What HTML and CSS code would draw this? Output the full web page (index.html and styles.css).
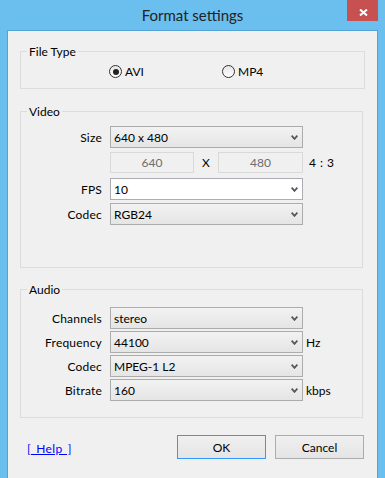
FILE: index.html
```html
<!DOCTYPE html>
<html lang="en">
<head>
    <meta charset="UTF-8">
    <meta name="viewport" content="width=device-width, initial-scale=1.0">
    <title>Format settings</title>
    <link rel="stylesheet" href="styles.css">
</head>
<body>
    <div class="window">
        <div class="titlebar">
            <div></div>
            <div class="title">Format settings</div>
            <div class="close">
                <svg width="9" height="7" viewBox="0 0 9 7"><path d="M1 0.5 8 6.5 M8 0.5 1 6.5" stroke="#fff" stroke-width="2" fill="none"/></svg>
            </div>
        </div>

        <div class="client">
            <div class="group group-type">
                <div class="group-title">File Type</div>
                <div class="radios">
                    <div class="radio"><span class="dot checked"></span>AVI</div>
                    <div class="radio"><span class="dot"></span>MP4</div>
                </div>
            </div>

            <div class="group group-video">
                <div class="group-title">Video</div>
                <div class="row row-size">
                    <div class="label">Size</div>
                    <div class="combo"><span>640 x 480</span><svg class="arrow" width="7" height="5" viewBox="0 0 7 5"><path d="M0.6 0.6 3.5 3.9 6.4 0.6" fill="none" stroke="#555" stroke-width="1.7"/></svg></div>
                </div>
                <div class="row row-dims">
                    <div class="label"></div>
                    <div class="dims">
                        <div class="edit edit-w">640</div>
                        <div class="times">X</div>
                        <div class="edit edit-h">480</div>
                    </div>
                    <div class="unit ratio">4 : 3</div>
                </div>
                <div class="row row-fps">
                    <div class="label">FPS</div>
                    <div class="combo editable"><span>10</span><svg class="arrow" width="7" height="5" viewBox="0 0 7 5"><path d="M0.6 0.6 3.5 3.9 6.4 0.6" fill="none" stroke="#555" stroke-width="1.7"/></svg></div>
                </div>
                <div class="row row-codec">
                    <div class="label">Codec</div>
                    <div class="combo"><span>RGB24</span><svg class="arrow" width="7" height="5" viewBox="0 0 7 5"><path d="M0.6 0.6 3.5 3.9 6.4 0.6" fill="none" stroke="#555" stroke-width="1.7"/></svg></div>
                </div>
            </div>

            <div class="group group-audio">
                <div class="group-title">Audio</div>
                <div class="row row-first">
                    <div class="label">Channels</div>
                    <div class="combo"><span>stereo</span><svg class="arrow" width="7" height="5" viewBox="0 0 7 5"><path d="M0.6 0.6 3.5 3.9 6.4 0.6" fill="none" stroke="#555" stroke-width="1.7"/></svg></div>
                </div>
                <div class="row">
                    <div class="label">Frequency</div>
                    <div class="combo"><span>44100</span><svg class="arrow" width="7" height="5" viewBox="0 0 7 5"><path d="M0.6 0.6 3.5 3.9 6.4 0.6" fill="none" stroke="#555" stroke-width="1.7"/></svg></div>
                    <div class="unit">Hz</div>
                </div>
                <div class="row">
                    <div class="label">Codec</div>
                    <div class="combo"><span>MPEG-1 L2</span><svg class="arrow" width="7" height="5" viewBox="0 0 7 5"><path d="M0.6 0.6 3.5 3.9 6.4 0.6" fill="none" stroke="#555" stroke-width="1.7"/></svg></div>
                </div>
                <div class="row">
                    <div class="label">Bitrate</div>
                    <div class="combo"><span>160</span><svg class="arrow" width="7" height="5" viewBox="0 0 7 5"><path d="M0.6 0.6 3.5 3.9 6.4 0.6" fill="none" stroke="#555" stroke-width="1.7"/></svg></div>
                    <div class="unit">kbps</div>
                </div>
            </div>

            <div class="footer">
                <a class="help" href="#">[ Help ]</a>
                <div class="buttons">
                    <button class="btn default">OK</button>
                    <button class="btn">Cancel</button>
                </div>
            </div>
        </div>
    </div>
</body>
</html>
```

FILE: styles.css
```css
body {
    margin: 0;
    padding: 0;
    font-family: Lato, "Open Sans", sans-serif;
    font-size: 12px;
    color: #000;
}
.window {
    width: 385px;
    height: 478px;
    background-color: #6bbfef;
}
.titlebar {
    height: 30px;
    display: grid;
    grid-template-columns: 1fr auto 1fr;
}
.title {
    font-size: 15px;
    line-height: 30px;
    color: #222;
}
.close {
    justify-self: end;
    align-self: start;
    width: 31px;
    height: 21px;
    margin-right: 7px;
    background-color: #c75050;
    display: flex;
    align-items: center;
    justify-content: center;
    box-sizing: border-box;
    padding: 3px 0 0 2px;
}
.close svg {
    display: block;
}
.client {
    margin: 0 7px;
    height: 438px;
    border: 1px solid #55a2d6;
    background-color: #f0f0f0;
    padding-top: 20px;
    box-sizing: content-box;
}
.group {
    margin-left: 12px;
    width: 343px;
    box-sizing: border-box;
    border: 1px solid #dcdcdc;
}
.group-type {
    width: 345px;
    padding-bottom: 9px;
}
.group-video {
    margin-top: 22px;
    padding-bottom: 42px;
}
.group-audio {
    margin-top: 21px;
    padding-bottom: 16px;
}
.group-title {
    display: table;
    margin: -8px 0 0 6px;
    padding: 0 2px;
    line-height: 15px;
    background-color: #f0f0f0;
}
.radios {
    display: flex;
    margin: 5px 0 0 88px;
    line-height: 15px;
}
.radio {
    width: 113px;
    display: flex;
    align-items: center;
    gap: 3px;
}
.dot {
    width: 11px;
    height: 11px;
    border: 1px solid #333;
    border-radius: 50%;
    background: linear-gradient(#e6e6e6, #ffffff);
    display: flex;
    align-items: center;
    justify-content: center;
}
.dot.checked::after {
    content: "";
    width: 6px;
    height: 6px;
    border-radius: 50%;
    background-color: #222;
}
.row {
    display: flex;
    align-items: center;
    margin-top: 2px;
}
.row-size {
    margin-top: 7px;
}
.row-dims {
    margin-top: 4px;
}
.row-fps {
    margin-top: 5px;
}
.row-codec {
    margin-top: 3px;
}
.row-first {
    margin-top: 10px;
}
.label {
    width: 81px;
    margin-right: 8px;
    text-align: right;
    letter-spacing: 0.2px;
}
.combo {
    width: 193px;
    height: 22px;
    box-sizing: border-box;
    border: 1px solid #acacac;
    background: linear-gradient(#f2f2f2, #e5e5e5);
    display: flex;
    align-items: center;
    justify-content: space-between;
    padding: 0 4px 0 3px;
}
.combo.editable {
    background: #fff;
    border-color: #abadb3;
}
.arrow {
    display: block;
}
.dims {
    width: 193px;
    display: flex;
    align-items: center;
}
.edit {
    height: 21px;
    box-sizing: border-box;
    border: 1px solid #d9d9d9;
    background-color: #f0f0f0;
    color: #6d6d6d;
    text-align: center;
    line-height: 19px;
}
.edit-w {
    width: 84px;
}
.edit-h {
    width: 85px;
}
.times {
    width: 24px;
    text-align: center;
}
.unit {
    margin-left: 3px;
}
.ratio {
    margin-left: 6px;
    letter-spacing: 0.5px;
}
.footer {
    margin-top: 17px;
    padding: 0 13px 0 19px;
    display: flex;
    align-items: center;
    justify-content: space-between;
}
.help {
    color: #0000ff;
    margin-top: 3px;
    word-spacing: 2px;
    letter-spacing: 0.3px;
}
.buttons {
    display: flex;
    gap: 9px;
}
.btn {
    width: 89px;
    height: 24px;
    font-family: Lato, "Open Sans", sans-serif;
    font-size: 12px;
    color: #000;
    border: 1px solid #acacac;
    background: linear-gradient(#f0f0f0, #e5e5e5);
    padding: 0;
}
.btn.default {
    border-color: #3399ff;
}
```
